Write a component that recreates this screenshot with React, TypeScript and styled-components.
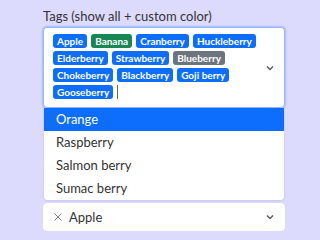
import React from 'react'
import styled, { createGlobalStyle } from 'styled-components'

const GlobalStyle = createGlobalStyle`
  html, body {
    margin: 0;
    padding: 0;
    background: #dddbfd;
    font-family: Lato, "Noto Sans", sans-serif;
  }
`

const Page = styled.div`
  width: 320px;
  height: 240px;
  overflow: hidden;
  padding: 7px 0 0 43px;
  box-sizing: border-box;
`

const Field = styled.div<{ $top?: number }>`
  position: relative;
  width: 242px;
  margin-top: ${p => p.$top ?? 0}px;
`

const Label = styled.div`
  font-size: 13px;
  line-height: 18px;
  color: #333;
  margin-bottom: 2px;
  white-space: nowrap;
`

const Control = styled.div<{ $focused?: boolean }>`
  position: relative;
  display: flex;
  align-items: center;
  box-sizing: border-box;
  background: #fff;
  border: 1px solid ${p => (p.$focused ? '#9ab4fb' : '#fff')};
  border-radius: 4px;
  box-shadow: ${p => (p.$focused ? '0 0 0 1.5px #b9c6fb' : 'none')};
`

const TagArea = styled.div`
  flex: 1;
  display: flex;
  flex-wrap: wrap;
  align-items: center;
  gap: 3px 4px;
  padding: 6px 0 8px 9px;
`

const Tag = styled.span<{ $color?: string }>`
  display: inline-flex;
  align-items: center;
  height: 14px;
  padding: 0 4px;
  border-radius: 3px;
  background: ${p => p.$color ?? '#0d6efd'};
  color: #fff;
  font-size: 10px;
  font-weight: 700;
  line-height: 14px;
  white-space: nowrap;
`

const Caret = styled.span`
  width: 1px;
  height: 14px;
  background: #666;
`

const Chevron = styled.svg`
  flex: none;
  width: 8px;
  height: 6px;
  margin: 0 10px 0 4px;
`

const Menu = styled.ul`
  position: absolute;
  z-index: 2;
  top: 100%;
  left: 1px;
  width: 240px;
  margin: 0;
  padding: 0;
  list-style: none;
  background: #fff;
  border-radius: 0 0 4px 4px;
  box-shadow: 0 1px 3px rgba(60, 60, 120, 0.15);
  overflow: hidden;
`

const Option = styled.li<{ $active?: boolean }>`
  height: 23px;
  line-height: 23px;
  padding-left: 12px;
  font-size: 13px;
  color: ${p => (p.$active ? '#fff' : '#333')};
  background: ${p => (p.$active ? '#0d6efd' : '#fff')};
`

const SingleValue = styled.div`
  flex: 1;
  display: flex;
  align-items: center;
  gap: 7px;
  height: 26px;
  padding-left: 10px;
  font-size: 13px;
  color: #333;
`

const ClearIcon = styled.svg`
  width: 8px;
  height: 8px;
`

const ChevronIcon = () => (
  <Chevron viewBox="0 0 8 6">
    <path d="M1 1.5 L4 4.5 L7 1.5" fill="none" stroke="#555" strokeWidth="1.3" />
  </Chevron>
)

const tags: { name: string; color?: string }[] = [
  { name: 'Apple' },
  { name: 'Banana', color: '#198754' },
  { name: 'Cranberry' },
  { name: 'Huckleberry' },
  { name: 'Elderberry' },
  { name: 'Strawberry' },
  { name: 'Blueberry', color: '#6c757d' },
  { name: 'Chokeberry' },
  { name: 'Blackberry' },
  { name: 'Goji berry' },
  { name: 'Gooseberry' },
]

const options = ['Orange', 'Raspberry', 'Salmon berry', 'Sumac berry']

const App = () => {
  return (
    <>
      <GlobalStyle />
      <Page>
        <Field>
          <Label>Tags (show all + custom color)</Label>
          <Control $focused>
            <TagArea>
              {tags.map(t => (
                <Tag key={t.name} $color={t.color}>{t.name}</Tag>
              ))}
              <Caret />
            </TagArea>
            <ChevronIcon />
          </Control>
          <Menu>
            {options.map((o, i) => (
              <Option key={o} $active={i === 0}>{o}</Option>
            ))}
          </Menu>
        </Field>
        <Field $top={95}>
          <Control>
            <SingleValue>
              <ClearIcon viewBox="0 0 8 8">
                <path d="M0.5 0.5 L7.5 7.5 M7.5 0.5 L0.5 7.5" stroke="#888" strokeWidth="1" />
              </ClearIcon>
              Apple
            </SingleValue>
            <ChevronIcon />
          </Control>
        </Field>
      </Page>
    </>
  )
}

export default App
